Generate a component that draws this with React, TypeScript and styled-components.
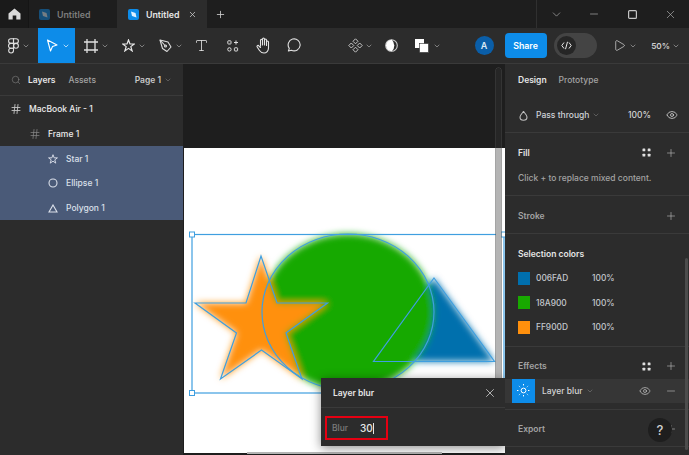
import * as React from 'react';
import styled, { createGlobalStyle } from 'styled-components';
import { ChevronDown, Eye, Hash, Minus, Play, Plus, Search, Type, X } from 'lucide-react';

const GlobalStyle = createGlobalStyle`
    html, body {
        margin: 0;
        padding: 0;
        background: #1e1e1e;
    }

    * {
        box-sizing: border-box;
    }
`;

const colors = {
    bar: '#1e1e1e',
    panel: '#2c2c2c',
    line: '#3a3a3a',
    blue: '#0d8ce9',
    text: '#e6e6e6',
    muted: '#a3a3a3',
    selected: '#4a5a78',
};

const Page = styled.div`
    width: 689px;
    height: 455px;
    overflow: hidden;
    display: flex;
    flex-direction: column;
    font-family: Inter, 'Liberation Sans', sans-serif;
    font-size: 8.5px;
    font-weight: 500;
    color: ${colors.text};
    background: ${colors.bar};
`;

const TitleBar = styled.div`
    height: 28px;
    flex: 0 0 28px;
    display: flex;
    align-items: stretch;
    background: ${colors.bar};
`;

const HomeTab = styled.div`
    width: 29px;
    display: flex;
    align-items: center;
    justify-content: center;
    background: #1a1a1a;
    border-right: 1px solid #151515;
`;

const Tab = styled.div<{ $active?: boolean }>`
    width: ${p => (p.$active ? 90 : 88)}px;
    display: flex;
    align-items: center;
    padding-left: ${p => (p.$active ? 11 : 10)}px;
    gap: 7px;
    background: ${p => (p.$active ? colors.panel : colors.bar)};
    color: ${p => (p.$active ? colors.text : '#7d7d7d')};
    font-size: 8.8px;
    font-weight: 600;
`;

const TabClose = styled.span`
    display: flex;
    margin-left: 2px;
    color: #cfcfcf;
`;

const NewTab = styled.div`
    width: 26px;
    display: flex;
    align-items: center;
    justify-content: center;
    color: #cfcfcf;
`;

const WindowControls = styled.div`
    margin-left: auto;
    width: 153px;
    display: flex;
    border-left: 1px solid #303030;
`;

const WindowButton = styled.div`
    flex: 1;
    display: flex;
    align-items: center;
    justify-content: center;
    color: #b5b5b5;
`;

const Toolbar = styled.div`
    height: 36px;
    flex: 0 0 36px;
    display: flex;
    align-items: stretch;
    background: ${colors.panel};
    border-bottom: 1px solid ${colors.line};
`;

const ToolButton = styled.div<{ $left?: number; $gap?: number }>`
    flex: none;
    margin-left: ${p => p.$left ?? 0}px;
    display: flex;
    align-items: center;
    gap: ${p => p.$gap ?? 3.5}px;
    color: #e8e8e8;
`;

const MoveTool = styled.div`
    flex: none;
    width: 37px;
    margin-left: 8px;
    padding-left: 8px;
    display: flex;
    align-items: center;
    gap: 3.5px;
    background: ${colors.blue};
`;

const ToolChevron = styled(ChevronDown)`
    color: #a8a8a8;
`;

const ToolSpacer = styled.div`
    flex: 1;
`;

const Avatar = styled.div`
    width: 19px;
    height: 19px;
    border-radius: 50%;
    background: #0a5ea8;
    display: flex;
    align-items: center;
    justify-content: center;
    color: #dbe9f5;
    font-size: 9px;
    font-weight: 600;
`;

const ShareButton = styled.div`
    width: 42px;
    height: 25px;
    align-self: center;
    margin-left: 11px;
    border-radius: 4px;
    background: ${colors.blue};
    display: flex;
    align-items: center;
    justify-content: center;
    color: #fff;
    font-size: 8.8px;
    font-weight: 600;
`;

const DevToggle = styled.div`
    width: 43px;
    height: 25px;
    align-self: center;
    margin-left: 7px;
    padding: 3px;
    border-radius: 13px;
    background: #444;
`;

const DevKnob = styled.div`
    width: 19px;
    height: 19px;
    border-radius: 50%;
    background: #262626;
    display: flex;
    align-items: center;
    justify-content: center;
`;

const Zoom = styled.span`
    font-size: 8.2px;
    font-weight: 600;
    color: #cfcfcf;
`;

const Body = styled.div`
    flex: 1;
    min-height: 0;
    display: flex;
`;

const LeftPanel = styled.div`
    width: 183px;
    flex: 0 0 183px;
    background: ${colors.panel};
`;

const LeftHeader = styled.div`
    height: 32px;
    display: flex;
    align-items: center;
    padding: 0 11px 0 11px;
    border-bottom: 1px solid ${colors.line};
    margin-bottom: 1px;
`;

const LeftTab = styled.span<{ $active?: boolean }>`
    margin-left: ${p => (p.$active ? 7 : 13)}px;
    color: ${p => (p.$active ? colors.text : colors.muted)};
    font-weight: ${p => (p.$active ? 600 : 500)};
`;

const PagePicker = styled.span`
    margin-left: auto;
    display: flex;
    align-items: center;
    gap: 3px;
    color: #c8c8c8;
    font-weight: 600;
`;

const LayerRow = styled.div<{ $indent: number; $selected?: boolean }>`
    height: 24.7px;
    display: flex;
    align-items: center;
    gap: 7px;
    padding-left: ${p => p.$indent}px;
    background: ${p => (p.$selected ? colors.selected : 'transparent')};
    color: ${p => (p.$selected ? '#dbe0ea' : '#ececec')};
`;

const LayerIcon = styled.span`
    width: 12px;
    display: flex;
    justify-content: center;
    color: #c4c4c4;
`;

const Canvas = styled.div`
    position: relative;
    flex: 1;
    min-width: 0;
    display: flex;
    flex-direction: column;
    background: #1e1e1e;
`;

const Frame = styled.div`
    height: 305px;
    margin-top: 84px;
    margin-left: 1px;
    background: #fff;
`;

const Drawing = styled.svg`
    position: absolute;
    left: 0;
    top: 0;
`;

const VerticalScroll = styled.div`
    position: absolute;
    left: 313px;
    top: 4px;
    width: 5px;
    height: 312px;
    border-radius: 3px 3px 0 0;
    background: linear-gradient(#262626 0, #262626 80px, #b4b4b4 80px);
    box-shadow: 0 0 0 0.5px #4a4a4a;
`;

const HorizontalScroll = styled.div`
    position: absolute;
    left: 64px;
    bottom: 1px;
    width: 195px;
    height: 2px;
    background: #b4b4b4;
`;

const BlurPopup = styled.div`
    position: absolute;
    left: 138px;
    top: 314px;
    width: 184px;
    height: 68px;
    background: ${colors.panel};
    box-shadow: 0 2px 10px rgba(0, 0, 0, 0.45);
`;

const PopupHeader = styled.div`
    height: 30px;
    display: flex;
    align-items: center;
    justify-content: space-between;
    padding: 0 8px 0 12px;
    border-bottom: 1px solid ${colors.line};
    font-weight: 600;
`;

const PopupBody = styled.div`
    padding: 8px 4px;
`;

const BlurField = styled.div`
    width: 63px;
    height: 24px;
    display: flex;
    align-items: center;
    padding-left: 5px;
    border: 2.5px solid #e60012;
`;

const BlurLabel = styled.span`
    width: 28px;
    color: #7c7c7c;
`;

const BlurValue = styled.span`
    font-size: 10px;
    color: #e6e6e6;
    border-right: 1px solid #e6e6e6;
    line-height: 11px;
`;

const RightPanel = styled.div`
    position: relative;
    width: 184px;
    flex: 0 0 184px;
    background: ${colors.panel};
`;

const DesignTabs = styled.div`
    height: 32px;
    display: flex;
    align-items: center;
    gap: 12px;
    padding-left: 13px;
`;

const DesignTab = styled.span<{ $active?: boolean }>`
    color: ${p => (p.$active ? colors.text : colors.muted)};
    font-weight: ${p => (p.$active ? 600 : 500)};
`;

const BlendRow = styled.div`
    height: 37px;
    display: flex;
    align-items: center;
    padding: 2px 11px 0 14px;
    border-bottom: 1px solid ${colors.line};
`;

const BlendName = styled.span`
    margin-left: 8px;
    display: flex;
    align-items: center;
    gap: 3px;
    color: #cfd3d8;
`;

const BlendOpacity = styled.span`
    margin-left: auto;
    margin-right: 15px;
    color: #d4d4d4;
`;

const Section = styled.div<{ $bottom: number }>`
    padding-top: 7px;
    padding-bottom: ${p => p.$bottom}px;
    border-bottom: 1px solid ${colors.line};
`;

const SectionHeader = styled.div<{ $dim?: boolean }>`
    height: 25px;
    display: flex;
    align-items: center;
    padding: 0 12px 0 13px;
    color: ${p => (p.$dim ? colors.muted : colors.text)};
    font-weight: 600;
`;

const SectionActions = styled.div`
    margin-left: auto;
    display: flex;
    align-items: center;
    gap: 14px;
    color: #c4c4c4;
`;

const Hint = styled.div`
    height: 24px;
    display: flex;
    align-items: center;
    padding: 1px 0 0 13px;
    color: ${colors.muted};
`;

const ColorRow = styled.div`
    height: 24.5px;
    display: flex;
    align-items: center;
    padding-left: 13px;
    font-size: 8.4px;
    color: #c4c8cc;
`;

const Swatch = styled.span<{ $color: string }>`
    width: 12px;
    height: 13px;
    background: ${p => p.$color};
    margin-right: 6px;
`;

const ColorName = styled.span`
    width: 56px;
`;

const EffectRow = styled.div`
    height: 24px;
    display: flex;
    align-items: center;
    padding: 0 12px 0 7px;
    background: #363636;
    color: #d4d4d4;
`;

const EffectIcon = styled.div`
    width: 23px;
    height: 24px;
    background: ${colors.blue};
    display: flex;
    align-items: center;
    justify-content: center;
    margin-right: 7px;
`;

const EffectName = styled.span`
    display: flex;
    align-items: center;
    gap: 3px;
`;

const HelpButton = styled.div`
    position: absolute;
    left: 143px;
    top: 354px;
    width: 24px;
    height: 24px;
    border-radius: 50%;
    background: #1e1e1e;
    display: flex;
    align-items: center;
    justify-content: center;
    color: #d0d0d0;
    font-size: 13px;
`;

const PanelScroll = styled.div`
    position: absolute;
    right: 1px;
    top: 194px;
    width: 3px;
    height: 192px;
    border-radius: 2px;
    background: #4c4c4c;
`;

const HomeIcon = () => (
    <svg width="13" height="12" viewBox="0 0 13 12">
        <path d="M6.5 0.5 L12.5 5.5 V11.5 H8.3 V7.5 H4.7 V11.5 H0.5 V5.5 Z" fill="#d8d8d8" />
    </svg>
);

const FileIcon = ({ dim }: { dim?: boolean }) => (
    <svg width="11" height="11" viewBox="0 0 11 11" opacity={dim ? 0.45 : 1}>
        <rect width="11" height="11" rx="2" fill="#0d8ce9" />
        <path d="M3 2.5 L7.5 4 L8.5 8.5 L4 7 Z" fill="#dff1ff" />
    </svg>
);

const FigmaIcon = () => (
    <svg width="11" height="16" viewBox="0 0 11 16" fill="none" stroke="#dedede" strokeWidth="1.1">
        <path d="M5.5 0.8 H2.9 A2.3 2.3 0 0 0 2.9 5.4 H5.5 Z" />
        <path d="M5.5 0.8 H8.1 A2.3 2.3 0 0 1 8.1 5.4 H5.5 Z" />
        <path d="M5.5 5.4 H2.9 A2.3 2.3 0 0 0 2.9 10.2 H5.5 Z" />
        <circle cx="8" cy="7.8" r="2.4" />
        <path d="M5.5 10.2 H2.9 A2.4 2.4 0 1 0 5.5 12.6 Z" />
    </svg>
);

const MoveIcon = () => (
    <svg width="12" height="13" viewBox="0 0 12 13" fill="none" stroke="#fff" strokeWidth="1.1">
        <path d="M1.5 1 L11 6 L6.5 7.5 L4.5 12 Z" strokeLinejoin="round" />
    </svg>
);

const FrameIcon = () => (
    <svg width="14" height="14" viewBox="0 0 14 14" fill="none" stroke="#e0e0e0" strokeWidth="1.3">
        <path d="M3 0 V14 M11 0 V14 M0 3 H14 M0 11 H14" />
    </svg>
);

const StarIcon = ({ size = 13, color = '#e8e8e8' }: { size?: number; color?: string }) => (
    <svg width={size} height={size} viewBox="0 0 14 14" fill="none" stroke={color} strokeWidth="1.3">
        <path d="M7 1 L8.6 5.4 H13.2 L9.5 8.2 L10.9 12.8 L7 10.1 L3.1 12.8 L4.5 8.2 L0.8 5.4 H5.4 Z" />
    </svg>
);

const PenIcon = () => (
    <svg width="13" height="14" viewBox="0 0 13 14" fill="none" stroke="#dedede" strokeWidth="1.1">
        <path d="M1 1 L9 3 L12 8 L8 12.5 L3.5 9.5 Z" strokeLinejoin="round" />
        <path d="M1 1 L6 6.5" />
        <circle cx="6.5" cy="7" r="1" />
    </svg>
);

const ComponentsIcon = () => (
    <svg width="12" height="12" viewBox="0 0 12 12" fill="none" stroke="#dedede" strokeWidth="1">
        <rect x="0.8" y="0.8" width="3.2" height="3.2" rx="0.6" />
        <path d="M9 0.5 V4.5 M7 2.5 H11" />
        <circle cx="2.4" cy="9.4" r="1.7" />
        <rect x="7.4" y="7.8" width="3.2" height="3.2" rx="0.6" />
    </svg>
);

const HandIcon = () => (
    <svg width="15" height="17" viewBox="0 0 15 17" fill="none" stroke="#e4e4e4" strokeWidth="1.1" strokeLinecap="round">
        <path d="M4.5 9 V3.2 a1 1 0 0 1 2 0 V8 M6.5 7.5 V2 a1 1 0 0 1 2 0 V8 M8.5 7.5 V3 a1 1 0 0 1 2 0 V8.5 M10.5 8 V5 a1 1 0 0 1 2 0 V11 c0 3 -2 5 -4.5 5 c-2.5 0 -3.5 -1 -4.5 -2.5 L1.2 10 a1 1 0 0 1 1.6 -1.2 L4.5 10.5" />
    </svg>
);

const CommentIcon = () => (
    <svg width="15" height="15" viewBox="0 0 15 15" fill="none" stroke="#e0e0e0" strokeWidth="1.1">
        <path d="M2.4 13 L3.3 10.4 A6 6 0 1 1 5.4 12.2 Z" strokeLinejoin="round" />
    </svg>
);

const ComponentSetIcon = () => (
    <svg width="15" height="15" viewBox="0 0 15 15" fill="none" stroke="#d6d6d6" strokeWidth="0.9">
        <path d="M7.5 0.8 L10 3.3 L7.5 5.8 L5 3.3 Z" />
        <path d="M3.3 5 L5.8 7.5 L3.3 10 L0.8 7.5 Z" />
        <path d="M11.7 5 L14.2 7.5 L11.7 10 L9.2 7.5 Z" />
        <path d="M7.5 9.2 L10 11.7 L7.5 14.2 L5 11.7 Z" />
    </svg>
);

const ContrastIcon = () => (
    <svg width="13" height="13" viewBox="0 0 13 13">
        <circle cx="6.5" cy="6.5" r="5.8" fill="none" stroke="#d0d0d0" strokeWidth="1.1" />
        <path d="M6.8 0.7 A5.8 5.8 0 0 0 6.8 12.3 A8 8 0 0 0 6.8 0.7 Z" fill="#fff" />
    </svg>
);

const BooleanIcon = () => (
    <svg width="14" height="14" viewBox="0 0 14 14">
        <rect x="0" y="0" width="9" height="9" fill="#fff" />
        <rect x="4.5" y="4.5" width="9" height="9" fill="#fff" stroke="#2c2c2c" strokeWidth="0.6" />
    </svg>
);

const CodeIcon = () => (
    <svg width="11" height="9" viewBox="0 0 11 9" fill="none" stroke="#e6e6e6" strokeWidth="1">
        <path d="M3 1.5 L0.8 4.5 L3 7.5 M8 1.5 L10.2 4.5 L8 7.5 M6.5 0.8 L4.5 8.2" />
    </svg>
);

const DropIcon = () => (
    <svg width="9" height="11" viewBox="0 0 9 11" fill="none" stroke="#bdbdbd" strokeWidth="1.1">
        <path d="M4.5 1 C4.5 2.5 1 4.5 1 7 A3.5 3.3 0 0 0 8 7 C8 4.5 4.5 2.5 4.5 1 Z" />
    </svg>
);

const GridDots = () => (
    <svg width="9" height="9" viewBox="0 0 9 9" fill="#e0e0e0">
        <rect x="0.5" y="0.5" width="2.8" height="2.8" rx="0.6" />
        <rect x="5.7" y="0.5" width="2.8" height="2.8" rx="0.6" />
        <rect x="0.5" y="5.7" width="2.8" height="2.8" rx="0.6" />
        <rect x="5.7" y="5.7" width="2.8" height="2.8" rx="0.6" />
    </svg>
);

const BlurIcon = () => (
    <svg width="15" height="15" viewBox="0 0 15 15" fill="none" stroke="#fff" strokeWidth="1">
        <circle cx="7.5" cy="7.5" r="2.4" />
        <path
            d="M7.5 1 V3 M7.5 12 V14 M1 7.5 H3 M12 7.5 H14 M2.9 2.9 L4.2 4.2 M10.8 10.8 L12.1 12.1 M2.9 12.1 L4.2 10.8 M10.8 4.2 L12.1 2.9"
            strokeDasharray="1 0.6"
        />
    </svg>
);

const TriangleIcon = () => (
    <svg width="10" height="9" viewBox="0 0 10 9" fill="none" stroke="#dbe0ea" strokeWidth="1.1">
        <path d="M5 1 L9 8 H1 Z" />
    </svg>
);

const CircleIcon = () => (
    <svg width="10" height="10" viewBox="0 0 10 10" fill="none" stroke="#dbe0ea" strokeWidth="1.1">
        <circle cx="5" cy="5" r="4" />
    </svg>
);

const layers = [
    { name: 'MacBook Air - 1', indent: 10, icon: <Hash size={12} strokeWidth={1.8} /> },
    { name: 'Frame 1', indent: 29, icon: <Hash size={12} strokeWidth={1.4} color="#8a8a8a" /> },
    { name: 'Star 1', indent: 47, icon: <StarIcon size={10} color="#dbe0ea" />, selected: true },
    { name: 'Ellipse 1', indent: 47, icon: <CircleIcon />, selected: true },
    { name: 'Polygon 1', indent: 47, icon: <TriangleIcon />, selected: true },
];

const selectionColors = [
    { hex: '006FAD', color: '#006fad' },
    { hex: '18A900', color: '#18a900' },
    { hex: 'FF900D', color: '#ff900d' },
];

const STAR = '261,256 277,303 327.5,303 286,333 302,379 261.5,350 220.5,379 236.5,333 195,303 246,303';
const TRIANGLE = '434,278 494.5,361.5 373.5,361.5';
const OUTLINE = '#3f9fe0';

export default function App() {
    return (
        <Page>
            <GlobalStyle />
            <TitleBar>
                <HomeTab>
                    <HomeIcon />
                </HomeTab>
                <Tab>
                    <FileIcon dim={true} />
                    Untitled
                </Tab>
                <Tab $active={true}>
                    <FileIcon />
                    Untitled
                    <TabClose>
                        <X size={9} strokeWidth={2} />
                    </TabClose>
                </Tab>
                <NewTab>
                    <Plus size={11} strokeWidth={1.8} />
                </NewTab>
                <WindowControls>
                    <WindowButton>
                        <ChevronDown size={13} strokeWidth={1.2} />
                    </WindowButton>
                    <WindowButton>
                        <Minus size={12} strokeWidth={1.3} />
                    </WindowButton>
                    <WindowButton>
                        <svg width="9" height="9" viewBox="0 0 9 9" fill="none" stroke="#c4c4c4" strokeWidth="1.2">
                            <rect x="0.6" y="0.6" width="7.8" height="7.8" rx="1" />
                        </svg>
                    </WindowButton>
                    <WindowButton>
                        <X size={13} strokeWidth={1.2} />
                    </WindowButton>
                </WindowControls>
            </TitleBar>
            <Toolbar>
                <ToolButton $left={7.5}>
                    <FigmaIcon />
                    <ToolChevron size={8} strokeWidth={2} />
                </ToolButton>
                <MoveTool>
                    <MoveIcon />
                    <ChevronDown size={8} strokeWidth={2} color="#fff" />
                </MoveTool>
                <ToolButton $left={9} $gap={3}>
                    <FrameIcon />
                    <ToolChevron size={8} strokeWidth={2} />
                </ToolButton>
                <ToolButton $left={12.5}>
                    <StarIcon />
                    <ToolChevron size={8} strokeWidth={2} />
                </ToolButton>
                <ToolButton $left={12.5}>
                    <PenIcon />
                    <ToolChevron size={8} strokeWidth={2} />
                </ToolButton>
                <ToolButton $left={10.5}>
                    <Type size={15} strokeWidth={1.3} />
                </ToolButton>
                <ToolButton $left={18.5}>
                    <ComponentsIcon />
                </ToolButton>
                <ToolButton $left={16.5}>
                    <HandIcon />
                </ToolButton>
                <ToolButton $left={15}>
                    <CommentIcon />
                </ToolButton>
                <ToolButton $left={47} $gap={2.5}>
                    <ComponentSetIcon />
                    <ToolChevron size={8} strokeWidth={2} />
                </ToolButton>
                <ToolButton $left={11.5}>
                    <ContrastIcon />
                </ToolButton>
                <ToolButton $left={17.5} $gap={4}>
                    <BooleanIcon />
                    <ToolChevron size={8} strokeWidth={2} />
                </ToolButton>
                <ToolSpacer />
                <ToolButton>
                    <Avatar>A</Avatar>
                </ToolButton>
                <ShareButton>Share</ShareButton>
                <DevToggle>
                    <DevKnob>
                        <CodeIcon />
                    </DevKnob>
                </DevToggle>
                <ToolButton $left={16.5} $gap={2.5}>
                    <Play size={13} strokeWidth={1.2} />
                    <ToolChevron size={8} strokeWidth={2} />
                </ToolButton>
                <ToolButton $left={14.7} $gap={2}>
                    <Zoom>50%</Zoom>
                    <ToolChevron size={8} strokeWidth={2} />
                </ToolButton>
                <ToolButton $left={9} />
            </Toolbar>
            <Body>
                <LeftPanel>
                    <LeftHeader>
                        <Search size={10} strokeWidth={1.3} color="#8a8a8a" />
                        <LeftTab $active={true}>Layers</LeftTab>
                        <LeftTab>Assets</LeftTab>
                        <PagePicker>
                            Page 1
                            <ChevronDown size={8} strokeWidth={1.5} color="#8a8a8a" />
                        </PagePicker>
                    </LeftHeader>
                    {layers.map(layer => (
                        <LayerRow key={layer.name} $indent={layer.indent} $selected={layer.selected}>
                            <LayerIcon>{layer.icon}</LayerIcon>
                            {layer.name}
                        </LayerRow>
                    ))}
                </LeftPanel>
                <Canvas>
                    <Frame />
                    <Drawing width="322" height="391" viewBox="183 64 322 391">
                        <defs>
                            <filter id="layerBlur" x="-20%" y="-20%" width="140%" height="140%">
                                <feGaussianBlur stdDeviation="3.6" />
                            </filter>
                        </defs>
                        <g filter="url(#layerBlur)">
                            <polygon points={TRIANGLE} fill="#006fad" />
                            <ellipse cx="348" cy="312" rx="86" ry="78" fill="#18a900" />
                            <polygon points={STAR} fill="#ff900d" />
                        </g>
                        <g fill="none" stroke={OUTLINE} strokeWidth="1.2">
                            <polygon points={TRIANGLE} />
                            <ellipse cx="348" cy="312" rx="86" ry="78" />
                            <polygon points={STAR} />
                            <rect x="192" y="234.5" width="312" height="158.5" />
                        </g>
                        <g fill="#fff" stroke={OUTLINE} strokeWidth="1">
                            <rect x="189.5" y="232" width="5" height="5" />
                            <rect x="189.5" y="390.5" width="5" height="5" />
                            <rect x="501" y="232" width="5" height="5" />
                        </g>
                    </Drawing>
                    <VerticalScroll />
                    <HorizontalScroll />
                    <BlurPopup>
                        <PopupHeader>
                            Layer blur
                            <X size={14} strokeWidth={1.2} />
                        </PopupHeader>
                        <PopupBody>
                            <BlurField>
                                <BlurLabel>Blur</BlurLabel>
                                <BlurValue>30</BlurValue>
                            </BlurField>
                        </PopupBody>
                    </BlurPopup>
                </Canvas>
                <RightPanel>
                    <DesignTabs>
                        <DesignTab $active={true}>Design</DesignTab>
                        <DesignTab>Prototype</DesignTab>
                    </DesignTabs>
                    <BlendRow>
                        <DropIcon />
                        <BlendName>
                            Pass through
                            <ChevronDown size={8} strokeWidth={1.5} color="#8a8a8a" />
                        </BlendName>
                        <BlendOpacity>100%</BlendOpacity>
                        <Eye size={12} strokeWidth={1.4} />
                    </BlendRow>
                    <Section $bottom={6}>
                        <SectionHeader>
                            Fill
                            <SectionActions>
                                <GridDots />
                                <Plus size={12} strokeWidth={1.2} />
                            </SectionActions>
                        </SectionHeader>
                        <Hint>Click + to replace mixed content.</Hint>
                    </Section>
                    <Section $bottom={5}>
                        <SectionHeader $dim={true}>
                            Stroke
                            <SectionActions>
                                <Plus size={12} strokeWidth={1.2} />
                            </SectionActions>
                        </SectionHeader>
                    </Section>
                    <Section $bottom={6}>
                        <SectionHeader>Selection colors</SectionHeader>
                        {selectionColors.map(item => (
                            <ColorRow key={item.hex}>
                                <Swatch $color={item.color} />
                                <ColorName>{item.hex}</ColorName>
                                100%
                            </ColorRow>
                        ))}
                    </Section>
                    <Section $bottom={6}>
                        <SectionHeader $dim={true}>
                            Effects
                            <SectionActions>
                                <GridDots />
                                <Plus size={12} strokeWidth={1.2} />
                            </SectionActions>
                        </SectionHeader>
                        <EffectRow>
                            <EffectIcon>
                                <BlurIcon />
                            </EffectIcon>
                            <EffectName>
                                Layer blur
                                <ChevronDown size={8} strokeWidth={1.5} color="#8a8a8a" />
                            </EffectName>
                            <SectionActions>
                                <Eye size={12} strokeWidth={1.4} />
                                <Minus size={12} strokeWidth={1.2} />
                            </SectionActions>
                        </EffectRow>
                    </Section>
                    <Section $bottom={4}>
                        <SectionHeader $dim={true}>
                            Export
                            <SectionActions>
                                <Plus size={12} strokeWidth={1.2} />
                            </SectionActions>
                        </SectionHeader>
                    </Section>
                    <HelpButton>?</HelpButton>
                    <PanelScroll />
                </RightPanel>
            </Body>
        </Page>
    );
}
